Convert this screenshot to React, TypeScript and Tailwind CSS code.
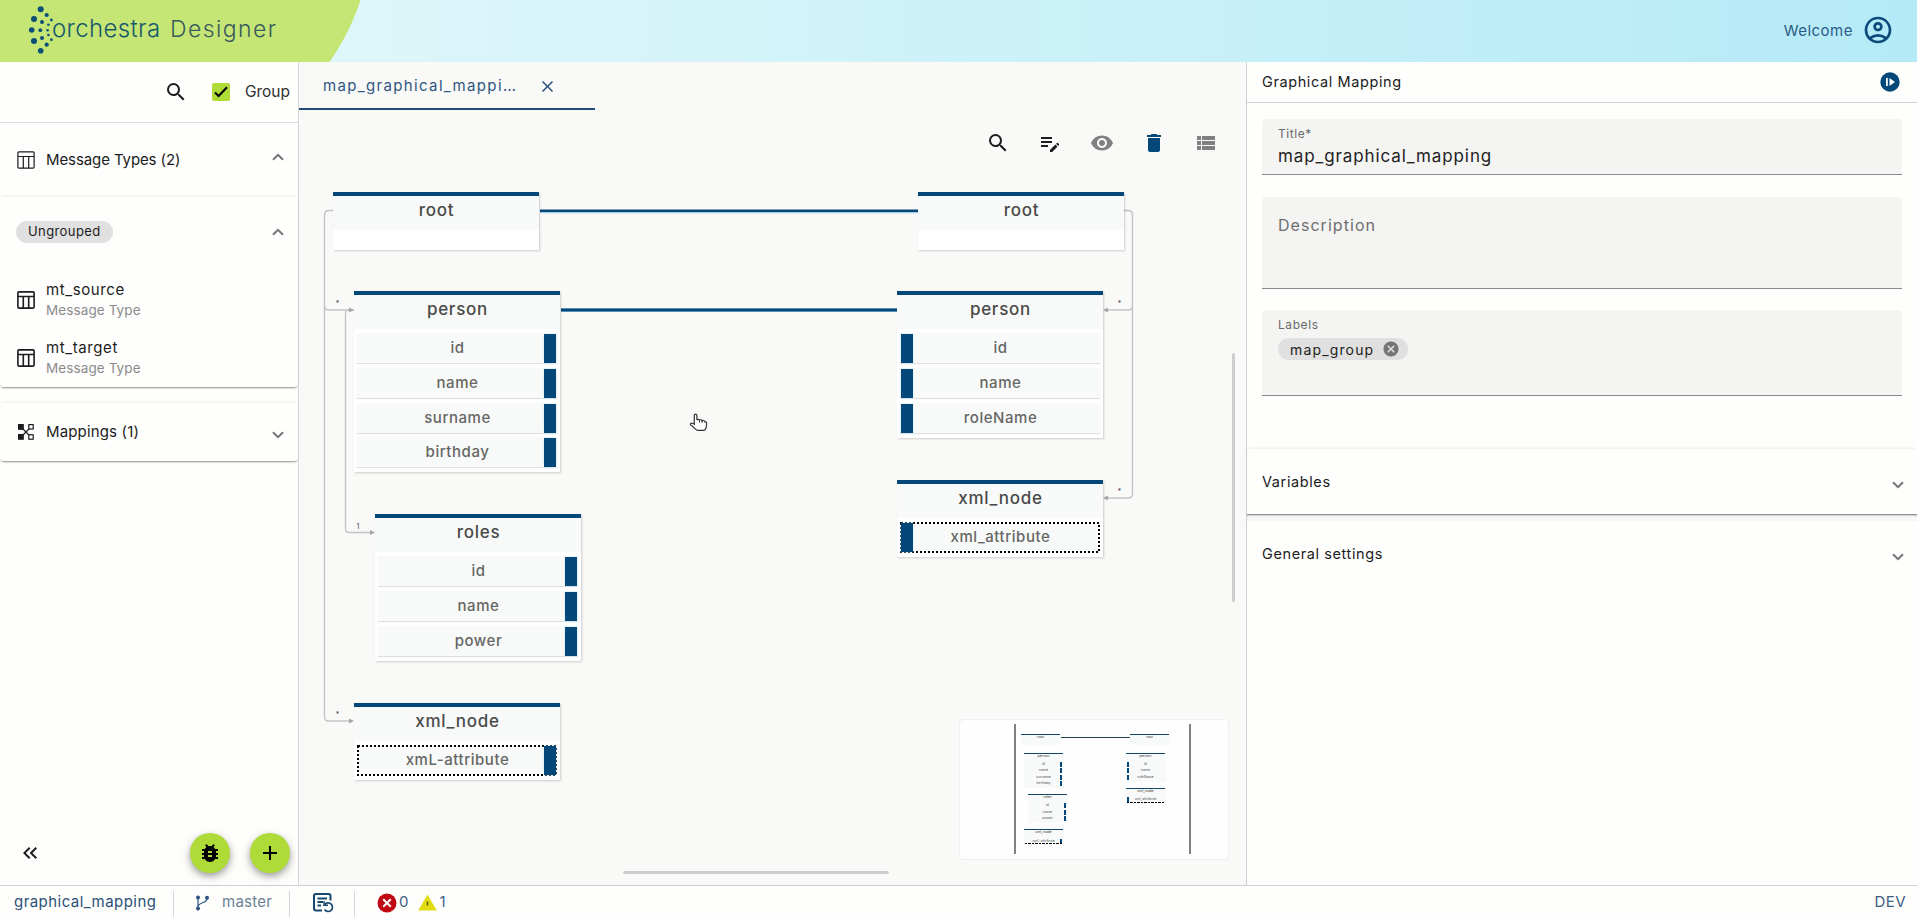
import React from 'react';
import clsx from 'clsx';
import {
  MdSearch,
  MdEditNote,
  MdVisibility,
  MdDelete,
  MdViewList,
  MdBugReport,
  MdAdd,
  MdClose,
  MdCancel,
  MdKeyboardDoubleArrowLeft,
  MdOutlineAccountCircle,
} from 'react-icons/md';

interface MapNode {
  id: string;
  title: string;
  x: number;
  y: number;
  height: number;
  side: 'source' | 'target';
  fields: string[];
  dotted?: boolean;
}

interface MiniNode {
  title: string;
  x: number;
  y: number;
  height: number;
  side: 'source' | 'target';
  rows: { label: string; y: number }[];
  dotted?: boolean;
}

const nodes: MapNode[] = [
  { id: 's-root', title: 'root', x: 34, y: 82, height: 58, side: 'source', fields: [] },
  { id: 's-person', title: 'person', x: 55, y: 181, height: 181, side: 'source', fields: ['id', 'name', 'surname', 'birthday'] },
  { id: 's-roles', title: 'roles', x: 76, y: 404, height: 147, side: 'source', fields: ['id', 'name', 'power'] },
  { id: 's-xml', title: 'xml_node', x: 55, y: 593, height: 77, side: 'source', fields: ['xmL-attribute'], dotted: true },
  { id: 't-root', title: 'root', x: 619, y: 82, height: 58, side: 'target', fields: [] },
  { id: 't-person', title: 'person', x: 598, y: 181, height: 147, side: 'target', fields: ['id', 'name', 'roleName'] },
  { id: 't-xml', title: 'xml_node', x: 598, y: 370, height: 77, side: 'target', fields: ['xml_attribute'], dotted: true },
];

const miniNodes: MiniNode[] = [
  { title: 'root', x: 61, y: 14, height: 11, side: 'source', rows: [] },
  {
    title: 'person', x: 64, y: 33, height: 35, side: 'source',
    rows: [{ label: 'id', y: 42 }, { label: 'name', y: 48 }, { label: 'surname', y: 55 }, { label: 'birthday', y: 61 }],
  },
  {
    title: 'roles', x: 68, y: 74, height: 29, side: 'source',
    rows: [{ label: 'id', y: 83 }, { label: 'name', y: 90 }, { label: 'power', y: 96 }],
  },
  { title: 'xml_node', x: 64, y: 109, height: 16, side: 'source', rows: [{ label: 'xmL-attribute', y: 119 }], dotted: true },
  { title: 'root', x: 170, y: 14, height: 11, side: 'target', rows: [] },
  {
    title: 'person', x: 166, y: 33, height: 29, side: 'target',
    rows: [{ label: 'id', y: 42 }, { label: 'name', y: 48 }, { label: 'roleName', y: 55 }],
  },
  { title: 'xml_node', x: 166, y: 68, height: 16, side: 'target', rows: [{ label: 'xml_attribute', y: 77 }], dotted: true },
];

const logoDots: [number, number, number][] = [
  [40.7, 9.3, 3], [34, 19, 3], [31.7, 30, 2.8], [34, 41, 3], [40.7, 50.7, 2.8],
  [46.7, 15, 2.1], [42, 22, 2], [40.3, 30.2, 1.9], [42, 38, 2], [46.7, 44.7, 2.1],
  [51.4, 20, 1.4], [48.4, 24.7, 1.3], [47.6, 30.2, 1.3], [48.4, 35, 1.3], [51.4, 39.7, 1.4],
];

function TableIcon({ bold }: { bold?: boolean }) {
  return (
    <svg width="18" height="18" viewBox="0 0 18 18" fill="none" stroke="#1c1c1c" strokeWidth={bold ? 1.6 : 1.2}>
      <rect x="0.9" y="0.9" width="16.2" height="16.2" rx="1" />
      <path d="M1 5.5h16M6.3 5.5V17M11.7 5.5V17" />
    </svg>
  );
}

function MappingIcon() {
  return (
    <svg width="16" height="16" viewBox="0 0 16 16" fill="none" stroke="#1c1c1c" strokeWidth="1.2">
      <path d="M3 3l10 10M13 3L3 13" />
      <rect x="0.6" y="0.6" width="4.6" height="4.6" fill="#1c1c1c" />
      <rect x="0.6" y="10.6" width="4.6" height="4.6" fill="#1c1c1c" />
      <rect x="10.8" y="0.6" width="4.4" height="4.4" fill="#fff" />
      <rect x="10.8" y="10.8" width="4.4" height="4.4" fill="#fff" />
    </svg>
  );
}

function Chevron({ up }: { up?: boolean }) {
  return (
    <svg width="12" height="8" viewBox="0 0 12 8" fill="none" stroke="#757575" strokeWidth="2">
      <path d={up ? 'M1 6.8L6 1.8L11 6.8' : 'M1 1.2L6 6.2L11 1.2'} />
    </svg>
  );
}

function Header() {
  return (
    <header className="relative h-[62px] shrink-0 flex items-center justify-between bg-linear-to-r from-[#e6f9fa] to-[#b4eaf7] overflow-hidden">
      <svg className="absolute inset-0" width="370" height="62">
        <path d="M0 0H360.5C354 20 343 43 329.5 62H0z" fill="#c5e675" />
        {logoDots.map(([cx, cy, r]) => (
          <circle key={`${cx}-${cy}`} cx={cx} cy={cy} r={r} fill="#0b4f78" />
        ))}
      </svg>
      <div className="relative flex items-baseline pl-[52px] -mt-1 font-light">
        <span className="w-[118px] text-2xl leading-8 tracking-[0.35px] text-[#17586b]">orchestra</span>
        <span className="text-[23px] leading-8 tracking-[1.4px] text-[#3a5a5c]">Designer</span>
      </div>
      <div className="flex items-center gap-[9px] pr-[23px] text-[#0b4a7a]">
        <span className="text-[15px] tracking-[0.5px] text-[#2a5c86]">Welcome</span>
        <MdOutlineAccountCircle size={32} className="-mt-[2px]" />
      </div>
    </header>
  );
}

function MessageTypeItem({ name }: { name: string }) {
  return (
    <div className="flex items-center h-[58px] pl-[17px] gap-[11px]">
      <TableIcon bold />
      <div>
        <div className="text-[15px] leading-5 tracking-[0.6px] text-[#1c1c1c]">{name}</div>
        <div className="text-[13.5px] leading-5 tracking-[0.1px] text-[#8b8b8b]">Message Type</div>
      </div>
    </div>
  );
}

function Sidebar() {
  return (
    <aside className="w-[299px] shrink-0 flex flex-col border-r border-[#d6d6d6] bg-[#fefefd]">
      <div className="h-[61px] shrink-0 border-b border-[#dcdcdc] flex items-center justify-end pr-2">
        <MdSearch size={24} className="text-[#1c1c1c]" />
        <span className="ml-6 flex h-[18px] w-[18px] items-center justify-center rounded-xs bg-[#aedb38]">
          <svg width="14" height="12" viewBox="0 0 14 12" fill="none" stroke="#000" strokeWidth="2">
            <path d="M1 6.5L4.6 10L13 1.2" />
          </svg>
        </span>
        <span className="ml-[15px] text-[15.5px] text-[#2f2f2f]">Group</span>
      </div>

      <section className="rounded-b-sm shadow-[0_2px_2px_-1px_rgba(0,0,0,0.45)]">
        <div className="flex h-[74px] items-center pl-[17px] pr-[14px] text-[#1c1c1c]">
          <TableIcon />
          <span className="ml-[11px] flex-1 text-[15px] tracking-[-0.1px]">Message Types (2)</span>
          <span className="-mt-1.5">
            <Chevron up />
          </span>
        </div>
        <div className="h-[190px] rounded-t-sm shadow-[0_-2px_3px_-1px_rgba(0,0,0,0.08)]">
          <div className="flex h-[69px] items-center justify-between pl-4 pr-[14px]">
            <span className="flex h-[22px] items-center rounded-full bg-[#e0e0e0] px-3 text-[13px] tracking-[0.4px] text-[#1c1c1c]">
              Ungrouped
            </span>
            <Chevron up />
          </div>
          <div className="pt-[5px]">
            <MessageTypeItem name="mt_source" />
            <MessageTypeItem name="mt_target" />
          </div>
        </div>
      </section>

      <section className="mt-[16px] flex h-[58px] items-center rounded-sm pl-[18px] pr-[14px] shadow-[0_2px_2px_-1px_rgba(0,0,0,0.45),0_-2px_3px_-1px_rgba(0,0,0,0.08)]">
        <MappingIcon />
        <span className="ml-3 flex-1 text-[15px] tracking-[0.15px] text-[#1c1c1c]">Mappings (1)</span>
        <span className="mt-1.5">
          <Chevron />
        </span>
      </section>

      <div className="mt-auto flex items-center pb-3 pl-[18px] pr-2">
        <MdKeyboardDoubleArrowLeft size={24} className="text-[#1c1c1c]" />
        <button className="ml-auto flex h-10 w-10 items-center justify-center rounded-full bg-[#aedb38] shadow-[0_3px_6px_rgba(0,0,0,0.3),0_4px_14px_rgba(0,0,0,0.12)]">
          <MdBugReport size={24} />
        </button>
        <button className="ml-5 flex h-10 w-10 items-center justify-center rounded-full bg-[#aedb38] shadow-[0_3px_6px_rgba(0,0,0,0.3),0_4px_14px_rgba(0,0,0,0.12)]">
          <MdAdd size={24} />
        </button>
      </div>
    </aside>
  );
}

function NodeBox({ node }: { node: MapNode }) {
  const isSource = node.side === 'source';
  return (
    <div
      className="absolute w-[206px] bg-white shadow-[1px_1px_2px_rgba(0,0,0,0.18)]"
      style={{ left: node.x, top: node.y, height: node.height }}
    >
      <div className="h-[38px] border-t-4 border-[#04487a] bg-[#f8faf9] pl-px text-center text-[17px] font-medium leading-[29px] tracking-[0.75px] text-[#4a4a4a]">
        {node.title}
      </div>
      <div className="flex flex-col gap-[5px] px-[3px] pt-1">
        {node.fields.map((field, i) => (
          <div
            key={field}
            className={clsx(
              'relative h-[30px] bg-[#f8faf9] pl-px text-center text-[15px] font-medium leading-[29px] tracking-[0.55px] text-[#666664]',
              !node.dotted && 'shadow-[0_1px_1px_rgba(0,0,0,0.12)]',
              i === 3 && '-mt-px',
            )}
          >
            {field}
            {node.dotted && (
              <svg className="absolute inset-0" width="200" height="31">
                <rect x="1" y="1" width="198" height="29" fill="none" stroke="#000" strokeWidth="2" strokeDasharray="2 2" />
              </svg>
            )}
            <span
              className={clsx(
                'absolute top-px h-[29px] w-3 bg-[#04487a] shadow-[0_0_2px_#bfe6f5]',
                isSource ? 'right-[1px]' : 'left-[1px]',
              )}
            />
          </div>
        ))}
      </div>
    </div>
  );
}

function Links() {
  return (
    <svg className="absolute inset-0" width="947" height="775" fill="none">
      <path d="M241 102.5H619" stroke="#a3cfe8" strokeWidth="1.5" />
      <path d="M241 100.7H619" stroke="#04487a" strokeWidth="2.6" />
      <path d="M262 200H598" stroke="#6fa6c6" strokeWidth="4" />
      <path d="M262 200H598" stroke="#04487a" strokeWidth="2.4" />

      <g stroke="#c4c4c4" strokeWidth="1.4">
        <path d="M34 100.5H30Q25.5 100.5 25.5 105V196Q25.5 200 30 200H50" />
        <path d="M25.5 196V607Q25.5 611 30 611H50" />
        <path d="M55 200H50Q46.5 200 46.5 204V418.5Q46.5 422.5 50 422.5H71" />
        <path d="M825 100.5H829Q833.5 100.5 833.5 105V196Q833.5 200 829 200H808" />
        <path d="M833.5 196V384Q833.5 388 829 388H808" />
      </g>
      <g fill="#a6a6a6">
        <path d="M50 197.5L55 200L50 202.5z" />
        <path d="M50 608.5L55 611L50 613.5z" />
        <path d="M71 420L76 422.5L71 425z" />
        <path d="M809 197.5L804 200L809 202.5z" />
        <path d="M809 385.5L804 388L809 390.5z" />
      </g>
      <g fill="#444" fontSize="7" textAnchor="middle">
        <text x="38.5" y="196">*</text>
        <text x="38.5" y="607">*</text>
        <text x="820.5" y="196">*</text>
        <text x="820.5" y="384">*</text>
        <text x="59" y="419">1</text>
      </g>
    </svg>
  );
}

function MiniMap() {
  return (
    <div className="absolute left-[660px] top-[609px] h-[141px] w-[270px] rounded-[4px] border border-[#efefef] bg-[#fefefe]">
      <svg width="268" height="139">
        <rect x="54" y="4" width="2" height="130" fill="#808080" />
        <rect x="229" y="4" width="2" height="130" fill="#808080" />
        <rect x="100" y="17" width="70" height="1" fill="#1d4257" />
        {miniNodes.map((n) => {
          const barX = n.side === 'source' ? n.x + 36 : n.x + 1;
          return (
            <g key={n.title + n.x} fontSize="3.6" textAnchor="middle" fill="#555">
              <rect x={n.x} y={n.y} width="40" height={n.height} fill="#f8faf9" />
              <rect x={n.x} y={n.y} width="39" height="1" fill="#0f466a" />
              <text x={n.x + 19.5} y={n.y + 4.3} fill="#333">{n.title}</text>
              {n.rows.map((r) => (
                <g key={r.label}>
                  <text x={n.x + 19.5} y={r.y + 3}>{r.label}</text>
                  <rect x={barX} y={r.y} width="2" height="5" fill="#04487a" />
                </g>
              ))}
              {n.dotted && (
                <path d={`M${n.x + 1} ${n.y + 14.5}H${n.x + 38}`} stroke="#000" strokeDasharray="2 1 3 1" />
              )}
            </g>
          );
        })}
      </svg>
    </div>
  );
}

function Workspace() {
  return (
    <main className="flex w-[947px] shrink-0 flex-col bg-[#f9f9f8]">
      <div className="flex h-[48px] w-[296px] shrink-0 items-center justify-between border-b-2 border-[#204e78] pl-6 pr-[38px] pt-[2px] text-[#2f5680]">
        <span className="text-[15px] tracking-[1.35px]">map_graphical_mappi…</span>
        <MdClose size={19} />
      </div>
      <div className="relative flex-1">
        <div className="flex items-center justify-end gap-7 pr-[28px] pt-[21px] text-[#1c1c1c]">
          <MdSearch size={24} />
          <MdEditNote size={24} />
          <MdVisibility size={24} className="text-[#808080]" />
          <MdDelete size={24} className="text-[#04487a]" />
          <MdViewList size={24} className="text-[#808080]" />
        </div>
        <Links />
        {nodes.map((node) => (
          <NodeBox key={node.id} node={node} />
        ))}
        <MiniMap />
        <div className="absolute left-[933px] top-[243px] h-[249px] w-[3px] rounded-full bg-[#cdcdcd]" />
        <div className="absolute left-[324px] top-[761px] h-[3px] w-[266px] rounded-full bg-[#cdcdcd]" />
        <svg className="absolute left-[390px] top-[303px]" width="19" height="19" viewBox="0 0 19 19">
          <path
            d="M5.3 2.5C5.3 0.7 7.9 0.7 7.9 2.5V7C8.3 6 10.3 6.1 10.5 7.3C11 6.4 12.9 6.6 13.1 7.9C13.8 7 15.7 7.4 15.9 8.9C17 8.6 17.6 9.2 17.6 10.2C17.6 13 17.4 17.3 14.5 17.3H8.6C6.5 17.3 4.8 13.5 2 12.3C0.7 11.6 1.7 9.6 3.4 10.2L5.3 11.3z"
            fill="#fff"
            stroke="#333"
            strokeWidth="1.2"
          />
          <path d="M10.5 7.3V9.5M13.1 7.9V9.8" stroke="#333" />
        </svg>
      </div>
    </main>
  );
}

function Panel({ title }: { title: string }) {
  return (
    <span className="flex flex-1 items-center justify-between pl-[15px] pr-[13px] text-[14.5px] tracking-[0.6px] text-[#1c1c1c]">
      {title}
      <span className="mt-1.5">
        <Chevron />
      </span>
    </span>
  );
}

function Properties() {
  return (
    <aside className="flex flex-1 flex-col border-l border-[#cfcfcf] bg-[#fefefd]">
      <div className="flex h-[41px] shrink-0 items-center justify-between border-b border-[#cfcfcf] pl-[15px] pr-[17px]">
        <span className="text-[14.5px] tracking-[0.6px] text-[#1c1c1c]">Graphical Mapping</span>
        <svg width="20" height="20" viewBox="0 0 20 20">
          <circle cx="10" cy="10" r="9.7" fill="#04487a" />
          <rect x="6" y="6" width="1.8" height="8" fill="#fff" />
          <path d="M9.5 6L15 10L9.5 14z" fill="#fff" />
        </svg>
      </div>

      <div className="flex flex-col pl-[15px] pr-[15px] pt-4">
        <div className="h-[56px] rounded-t-sm border-b border-[#8a8a8a] bg-[#f4f4f3] px-4 pt-[7px]">
          <div className="text-xs leading-4 tracking-[0.55px] text-[#6a6a6a]">Title*</div>
          <div className="text-[17px] leading-7 tracking-[0.9px] text-[#222]">map_graphical_mapping</div>
        </div>
        <div className="mt-[22px] h-[92px] rounded-t-sm border-b border-[#8a8a8a] bg-[#f4f4f3] px-4 pt-4 text-base leading-6 tracking-[1.04px] text-[#6e6e6e]">
          Description
        </div>
        <div className="mt-[21px] h-[86px] rounded-t-sm border-b border-[#8a8a8a] bg-[#f4f4f3] px-4 pt-[7px]">
          <div className="text-xs leading-4 tracking-[0.58px] text-[#6a6a6a]">Labels</div>
          <span className="mt-[5px] inline-flex h-[22px] items-center gap-2 rounded-full bg-[#e0e0e0] pl-3 pr-2 text-[14px] tracking-[1.15px] text-[#222]">
            map_group
            <MdCancel size={18} className="text-[#757575]" />
          </span>
        </div>
      </div>

      <div className="mt-[53px] flex h-[65px] rounded-sm shadow-[0_-2px_3px_-1px_rgba(0,0,0,0.08)]">
        <Panel title="Variables" />
      </div>
      <div className="h-[7px] bg-[#f7f7f6] shadow-[inset_0_2px_2px_-1px_rgba(0,0,0,0.55)]" />
      <div className="flex h-[65px]">
        <Panel title="General settings" />
      </div>
    </aside>
  );
}

function StatusBar() {
  return (
    <footer className="flex h-[32px] shrink-0 items-center border-t border-[#cfcfcf] bg-[#fefefd] pt-[2px] text-[15px] text-[#3d5f80]">
      <span className="w-[159px] pl-[14px] tracking-[0.45px] text-[#2b5075]">graphical_mapping</span>
      <span className="ml-[14px] h-[26px] w-px self-end bg-[#d6d6d6]" />
      <svg className="ml-[21px]" width="15" height="16" viewBox="0 0 15 16" fill="none" stroke="#2f5680" strokeWidth="1.2">
        <circle cx="3" cy="2.5" r="1.4" fill="#2f5680" />
        <circle cx="3" cy="13.5" r="1.4" fill="#2f5680" />
        <circle cx="12" cy="2.8" r="1.4" fill="#2f5680" />
        <path d="M3 3V13M12 3.5C12 9 3.5 6.5 3 12" />
      </svg>
      <span className="ml-[12px] w-[50px] tracking-[0.27px] text-[#6b8095]">master</span>
      <span className="ml-[17px] h-[26px] w-px self-end bg-[#d6d6d6]" />
      <svg className="ml-[23px]" width="21" height="20" viewBox="0 0 21 20" fill="none" stroke="#17486f" strokeWidth="2">
        <path d="M9 17.5H3Q1 17.5 1 15.5V3Q1 1 3 1H15.5Q17.5 1 17.5 3V7.5" />
        <path d="M4.5 5.5H14M4.5 9H10M4.5 12.5H8" />
        <path d="M11.8 11.5A4.3 4.3 0 1 1 11.5 16.5" strokeWidth="1.7" />
        <path d="M11 8.2V12.2H15" strokeWidth="1.5" />
      </svg>
      <span className="ml-[20px] h-[26px] w-px self-end bg-[#d6d6d6]" />
      <svg className="ml-[22px]" width="20" height="20" viewBox="0 0 20 20">
        <circle cx="10" cy="10" r="9.5" fill="#c00912" />
        <path d="M6.2 6.2L13.8 13.8M13.8 6.2L6.2 13.8" stroke="#fff" strokeWidth="2" />
      </svg>
      <span className="ml-[2px]">0</span>
      <svg className="ml-[10px]" width="19" height="17" viewBox="0 0 19 17">
        <path d="M9.5 0.5L18.8 16.5H0.2z" fill="#e0dc10" />
        <path d="M9.5 7.5V11.5" stroke="#5a5a10" strokeWidth="1.5" />
      </svg>
      <span className="ml-[2px]">1</span>
      <span className="ml-auto pr-[11px] tracking-[0.4px]">DEV</span>
    </footer>
  );
}

export default function App() {
  return (
    <div className="flex h-[917px] w-[1917px] flex-col overflow-hidden font-['Inter','Noto_Sans',sans-serif]">
      <Header />
      <div className="flex min-h-0 flex-1">
        <Sidebar />
        <Workspace />
        <Properties />
      </div>
      <StatusBar />
    </div>
  );
}
